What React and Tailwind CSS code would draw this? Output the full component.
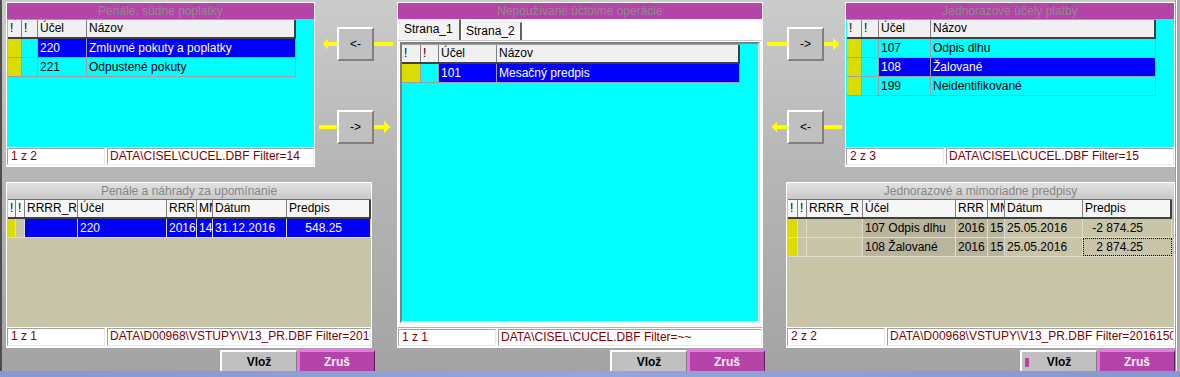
import React from 'react';

// cell colours
const Y = 'bg-[#dcdc00]';
const C = 'bg-[#00ffff] text-black';
const B = 'bg-[#0000ff] text-white';
const K = 'bg-[#c8c4a8] text-black';
const KD = 'bg-[#b9b59c] text-black';

const TOP_HEADER = ['!', '!', 'Účel', 'Názov'];
const BOTTOM_HEADER = ['!', '!', 'RRRR_R', 'Účel', 'RRR', 'MM', 'Dátum', 'Predpis'];

function Grid({ cols, header, rows, line, head }) {
  return (
    <div className="flex flex-col">
      <div className={`flex h-[20px] w-fit border-t border-b-2 border-b-[#404040] text-black ${head}`}>
        {header.map((h, i) => (
          <div
            key={i}
            className={`${cols[i]} shrink-0 overflow-hidden whitespace-nowrap pl-[2px] leading-[17px] ${
              i === header.length - 1 ? 'border-r-2 border-r-[#404040]' : 'border-r border-r-[#808080]'
            }`}
          >
            {h}
          </div>
        ))}
      </div>
      {rows.map((row, r) => (
        <div key={r} className={`flex h-[19px] w-fit border-b ${line}`}>
          {row.map((cell, i) => (
            <div
              key={i}
              className={`${cols[i]} shrink-0 overflow-hidden whitespace-nowrap border-r ${line} leading-[18px] ${
                cell.right ? 'pr-[28px] text-right' : 'pl-[2px]'
              } ${cell.c} ${cell.focus ? 'outline-1 -outline-offset-1 outline-dotted outline-black' : ''}`}
            >
              {cell.t}
            </div>
          ))}
        </div>
      ))}
    </div>
  );
}

function Status({ count, path, h }) {
  return (
    <div className={`flex shrink-0 gap-[2px] bg-white py-[1px] text-[#800000] ${h}`}>
      <div className="w-[98px] shrink-0 border border-t-[#a0a0a0] border-l-[#a0a0a0] border-r-[#e8e8e8] border-b-[#e8e8e8] bg-white pl-[3px] leading-[15px]">
        {count}
      </div>
      <div className="min-w-0 flex-1 overflow-hidden whitespace-nowrap border border-t-[#a0a0a0] border-l-[#a0a0a0] border-r-[#e8e8e8] border-b-[#e8e8e8] bg-white pl-[2px] leading-[15px]">
        {path}
      </div>
    </div>
  );
}

function PurpleTitle({ children }) {
  return (
    <div className="h-[16px] shrink-0 overflow-hidden whitespace-nowrap bg-[#b444a8] text-center leading-[16px] text-[#8c8c8c]">
      {children}
    </div>
  );
}

function TopPanel({ w, title, cols, rows, count, path }) {
  return (
    <div className={`flex h-[165px] shrink-0 flex-col border border-white bg-white ${w}`}>
      <PurpleTitle>{title}</PurpleTitle>
      <div className="h-[128px] shrink-0 overflow-hidden bg-[#00ffff] pl-[1px]">
        <Grid cols={cols} header={TOP_HEADER} rows={rows} line="border-[#a0a0a0]" head="border-t-[#a0a0a0] bg-[#f0f0f0]" />
      </div>
      <Status count={count} path={path} h="h-[19px]" />
    </div>
  );
}

function BottomPanel({ w, title, cols, rows, count, path }) {
  return (
    <div className={`mt-[15px] flex h-[166px] shrink-0 flex-col border border-white bg-white ${w}`}>
      <div className="h-[16px] shrink-0 bg-[linear-gradient(180deg,#e2e2e2,#c9c9c9)] text-center leading-[16px] text-[#858585]">
        {title}
      </div>
      <div className="h-[128px] shrink-0 overflow-hidden bg-[#c8c4a8] pl-[1px]">
        <Grid cols={cols} header={BOTTOM_HEADER} rows={rows} line="border-[#dcdcd0]" head="border-t-[#707070] bg-[#f6f6f6]" />
      </div>
      <Status count={count} path={path} h="h-[20px]" />
    </div>
  );
}

function ArrowHead({ dir, w }) {
  const pts =
    dir === 'left'
      ? `0,6 6,0 6,4 ${w},4 ${w},8 6,8 6,12`
      : `${w},6 ${w - 6},0 ${w - 6},4 0,4 0,8 ${w - 6},8 ${w - 6},12`;
  return (
    <svg width={w} height="12" viewBox={`0 0 ${w} 12`} className="shrink-0" shapeRendering="crispEdges">
      <polygon points={pts} fill="#ffff00" />
    </svg>
  );
}

function ArrowBtn({ label }) {
  return (
    <div className="flex h-[34px] w-[37px] shrink-0 items-center justify-center border-2 border-t-white border-l-white border-r-[#808080] border-b-[#808080] bg-[#c0c0c0] text-black">
      {label}
    </div>
  );
}

function Buttons({ pad, marker }) {
  return (
    <div className={`mt-[2px] flex h-[21px] gap-[1px] ${pad}`}>
      <div className="relative flex h-[21px] w-[77px] items-center justify-center border-t-2 border-l-2 border-r border-t-white border-l-white border-r-[#808080] bg-[#c0c0c0] font-bold text-black">
        {marker && <span className="absolute left-[3px] top-[6px] h-[9px] w-[4px] bg-[#b444a8]" />}
        Vlož
      </div>
      <div className="flex h-[21px] w-[77px] items-center justify-center border-t-2 border-l-2 border-r border-t-[#ee72ea] border-l-[#ee72ea] border-r-[#5c1c56] bg-[#b444a8] font-bold text-[#fbeefb]">
        Zruš
      </div>
    </div>
  );
}

export default function App() {
  return (
    <div className="flex h-[377px] w-[1180px] flex-col overflow-hidden bg-[linear-gradient(180deg,#cbcbcb_0%,#b6b6b6_45%,#a3a3a3_100%)] font-['Liberation_Sans',Arial,sans-serif] text-[12px]">
      <div className="flex h-[371px] shrink-0">
        <div className="w-[2px] shrink-0 bg-[#4e4e4e]" />
        <div className="w-[4px] shrink-0" />

        {/* left column */}
        <div className="flex w-[391px] shrink-0 flex-col pt-[2px]">
          <div className="flex h-[165px]">
            <TopPanel
              w="w-[309px]"
              title="Penále, súdne poplatky"
              cols={['w-[14px]', 'w-[16px]', 'w-[49px]', 'w-[209px]']}
              rows={[
                [{ c: Y }, { c: C }, { t: '220', c: B }, { t: 'Zmluvné pokuty a poplatky', c: B }],
                [{ c: Y }, { c: C }, { t: '221', c: C }, { t: 'Odpustené pokuty', c: C }],
              ]}
              count="1 z 2"
              path="DATA\CISEL\CUCEL.DBF Filter=14"
            />
            <div className="flex w-[82px] shrink-0 flex-col pt-[25px]">
              <div className="flex items-center pl-[7px]">
                <ArrowHead dir="left" w={15} />
                <ArrowBtn label={'<-'} />
                <div className="h-[4px] w-[19px] bg-[#ffff00]" />
              </div>
              <div className="mt-[49px] flex items-center pl-[4px]">
                <div className="h-[4px] w-[18px] bg-[#ffff00]" />
                <ArrowBtn label={'->'} />
                <ArrowHead dir="right" w={16} />
              </div>
            </div>
          </div>
          <BottomPanel
            w="w-[366px]"
            title="Penále a náhrady za upomínanie"
            cols={['w-[8px]', 'w-[9px]', 'w-[53px]', 'w-[89px]', 'w-[30px]', 'w-[16px]', 'w-[74px]', 'w-[84px]']}
            rows={[
              [
                { c: Y },
                { c: K },
                { c: B },
                { t: '220', c: B },
                { t: '2016', c: B },
                { t: '14', c: B },
                { t: '31.12.2016', c: B },
                { t: '548.25', c: B, right: true },
              ],
            ]}
            count="1 z 1"
            path="DATA\D00968\VSTUPY\V13_PR.DBF Filter=20161214"
          />
          <Buttons pad="pl-[214px]" />
        </div>

        {/* middle column */}
        <div className="flex w-[368px] shrink-0 flex-col pt-[2px]">
          <div className="flex h-[346px] w-[366px] flex-col border border-white bg-white">
            <PurpleTitle>Nepoužívané účtovné operácie</PurpleTitle>
            <div className="flex h-[21px] shrink-0 items-end bg-white text-black">
              <div className="h-[21px] w-[63px] border-t border-l border-r-2 border-t-[#e4e4e4] border-l-white border-r-[#606060] bg-[#f2f2f2] pl-[5px] leading-[19px]">
                Strana_1
              </div>
              <div className="ml-[1px] h-[18px] w-[60px] border-t border-r-2 border-t-[#e4e4e4] border-r-[#606060] bg-[#f6f6f6] pl-[4px] leading-[17px]">
                Strana_2
              </div>
            </div>
            <div className="flex h-[288px] shrink-0 flex-col border-t border-b border-t-[#c8c8c8] border-b-[#b0b0b0] bg-[#fafafa] px-[2px] pt-[1px] pb-[4px]">
              <div className="flex-1 overflow-hidden border-2 border-t-[#808080] border-l-[#808080] border-r-[#d8d8d8] border-b-[#e8e8e8] bg-[#00ffff]">
                <Grid
                  cols={['w-[19px]', 'w-[18px]', 'w-[58px]', 'w-[243px]']}
                  header={TOP_HEADER}
                  rows={[[{ c: Y }, { c: C }, { t: '101', c: B }, { t: 'Mesačný predpis', c: B }]]}
                  line="border-[#a0a0a0]"
                  head="border-t-[#a0a0a0] bg-[#f0f0f0]"
                />
              </div>
            </div>
            <Status count="1 z 1" path="DATA\CISEL\CUCEL.DBF Filter=~~" h="h-[19px]" />
          </div>
          <Buttons pad="pl-[213px]" />
        </div>

        {/* right column */}
        <div className="flex w-[410px] shrink-0 flex-col pt-[2px]">
          <div className="flex h-[165px]">
            <div className="flex w-[80px] shrink-0 flex-col pt-[25px]">
              <div className="flex items-center pl-[2px]">
                <div className="h-[4px] w-[20px] bg-[#ffff00]" />
                <ArrowBtn label={'->'} />
                <ArrowHead dir="right" w={15} />
              </div>
              <div className="mt-[49px] flex items-center pl-[6px]">
                <ArrowHead dir="left" w={16} />
                <ArrowBtn label={'<-'} />
                <div className="h-[4px] w-[18px] bg-[#ffff00]" />
              </div>
            </div>
            <TopPanel
              w="w-[330px]"
              title="Jednorazové účely platby"
              cols={['w-[15px]', 'w-[17px]', 'w-[52px]', 'w-[225px]']}
              rows={[
                [{ c: Y }, { c: C }, { t: '107', c: C }, { t: 'Odpis dlhu', c: C }],
                [{ c: Y }, { c: C }, { t: '108', c: B }, { t: 'Žalované', c: B }],
                [{ c: Y }, { c: C }, { t: '199', c: C }, { t: 'Neidentifikované', c: C }],
              ]}
              count="2 z 3"
              path="DATA\CISEL\CUCEL.DBF Filter=15"
            />
          </div>
          <div className="pl-[21px]">
            <BottomPanel
              w="w-[389px]"
              title="Jednorazové a mimoriadne predpisy"
              cols={['w-[10px]', 'w-[9px]', 'w-[56px]', 'w-[93px]', 'w-[32px]', 'w-[17px]', 'w-[78px]', 'w-[89px]']}
              rows={[
                [
                  { c: Y },
                  { c: K },
                  { c: K },
                  { t: '107 Odpis dlhu', c: KD },
                  { t: '2016', c: KD },
                  { t: '15', c: KD },
                  { t: '25.05.2016', c: K },
                  { t: '-2 874.25', c: K, right: true },
                ],
                [
                  { c: Y },
                  { c: K },
                  { c: K },
                  { t: '108 Žalované', c: KD },
                  { t: '2016', c: KD },
                  { t: '15', c: KD },
                  { t: '25.05.2016', c: K },
                  { t: '2 874.25', c: K, right: true, focus: true },
                ],
              ]}
              count="2 z 2"
              path="DATA\D00968\VSTUPY\V13_PR.DBF Filter=20161505"
            />
          </div>
          <Buttons pad="pl-[255px]" marker />
        </div>

        {/* window edge */}
        <div className="w-[1px] shrink-0 bg-[#9c9c9c]" />
        <div className="w-[1px] shrink-0 bg-white" />
        <div className="w-[3px] shrink-0 bg-[#a8a8a8]" />
      </div>
      <div className="h-[6px] shrink-0 bg-[linear-gradient(90deg,#8797cf,#95a4da,#8797cf)]" />
    </div>
  );
}
